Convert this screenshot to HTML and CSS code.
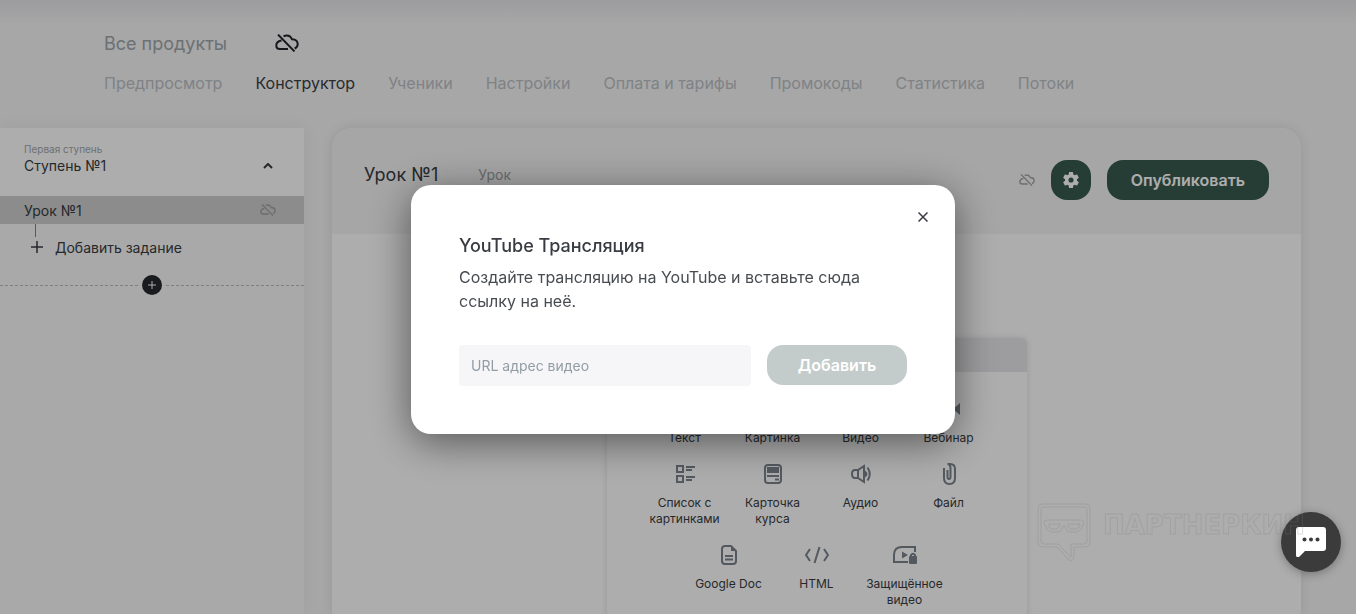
FILE: index.html
```html
<!DOCTYPE html>
<html lang="ru">
<head>
  <meta charset="UTF-8">
  <title>Конструктор</title>
  <meta name="viewport" content="width=device-width, initial-scale=1.0">
  <link rel="stylesheet" href="styles.css">
</head>
<body>

  <svg class="sprite" aria-hidden="true">
    <symbol id="cloud-off" viewBox="0 0 24 18">
      <path d="M6.500 6.500Q1.300 7.500 1.300 11.500 1.300 15 5 15h8M8.500 2.200Q14.500-.2 17 5.300q5.700.3 5.700 4.900 0 2.800-3 4.300M3 .6L19.500 17.400" fill="none" stroke="currentColor" stroke-width="2"/>
    </symbol>
  </svg>

  <header class="header">
    <div class="header-top">
      <a href="#" class="all-products">Все продукты</a>
      <svg class="cloud-big"><use href="#cloud-off"/></svg>
    </div>
    <nav class="tabs">
      <a href="#">Предпросмотр</a>
      <a href="#" class="active">Конструктор</a>
      <a href="#">Ученики</a>
      <a href="#">Настройки</a>
      <a href="#">Оплата и тарифы</a>
      <a href="#">Промокоды</a>
      <a href="#">Статистика</a>
      <a href="#">Потоки</a>
    </nav>
  </header>

  <main class="layout">
    <aside class="sidebar">
      <div class="step">
        <div>
          <div class="step-label">Первая ступень</div>
          <div class="step-name">Ступень №1</div>
        </div>
        <button class="icon-btn" aria-label="Свернуть">
          <svg width="10" height="6" viewBox="0 0 10 6"><path d="M1 5l4-4 4 4" fill="none" stroke="currentColor" stroke-width="2"/></svg>
        </button>
      </div>
      <a href="#" class="lesson">
        <span>Урок №1</span>
        <svg class="cloud-small"><use href="#cloud-off"/></svg>
      </a>
      <div class="tasks">
        <button class="add-task">
          <svg width="12" height="12" viewBox="0 0 12 12"><path d="M6 0v12M0 6h12" stroke="currentColor" stroke-width="1.500"/></svg>
          Добавить задание
        </button>
      </div>
      <div class="divider">
        <button class="add-step" aria-label="Добавить ступень">
          <svg width="8" height="8" viewBox="0 0 8 8"><path d="M4 0v8M0 4h8" stroke="currentColor"/></svg>
        </button>
      </div>
    </aside>

    <section class="panel">
      <div class="panel-header">
        <h1>Урок №1</h1>
        <span class="panel-type">Урок</span>
        <svg class="cloud-small"><use href="#cloud-off"/></svg>
        <button class="button settings" aria-label="Настройки">
          <svg width="16" height="16" viewBox="2 2 20 20"><path fill="currentColor" d="M19.430 12.980c.04-.32.07-.64.07-.98s-.03-.66-.07-.98l2.110-1.650c.19-.15.24-.42.12-.64l-2-3.460c-.12-.22-.39-.3-.61-.22l-2.490 1c-.52-.4-1.080-.73-1.690-.98l-.38-2.650A.49.49 0 0 0 14 2h-4c-.25 0-.46.18-.49.42l-.38 2.650c-.61.25-1.170.59-1.690.98l-2.490-1c-.23-.09-.49 0-.61.22l-2 3.460c-.13.22-.07.49.12.64l2.110 1.650c-.04.32-.07.65-.07.98s.03.66.07.98l-2.110 1.650c-.19.15-.24.42-.12.64l2 3.460c.12.22.39.3.61.22l2.490-1c.52.4 1.080.73 1.690.98l.38 2.650c.03.24.24.42.49.42h4c.25 0 .46-.18.49-.42l.38-2.650c.61-.25 1.170-.59 1.690-.98l2.490 1c.23.09.49 0 .61-.22l2-3.460c.12-.22.07-.49-.12-.64zM12 15.200a3.200 3.200 0 1 1 0-6.400 3.200 3.200 0 0 1 0 6.400z"/></svg>
        </button>
        <button class="button publish">Опубликовать</button>
      </div>

      <div class="blocks">
        <div class="blocks-bar"></div>
        <div class="blocks-list">
          <button class="block">
            <svg class="block-icon" viewBox="0 0 24 24"><path d="M4 6h16M4 12h16M4 18h10"/></svg>
            Текст
          </button>
          <button class="block">
            <svg class="block-icon" viewBox="0 0 24 24"><rect x="3" y="4" width="18" height="16" rx="2"/><path d="M4 17l5-5 4 4 3-3 4 4"/></svg>
            Картинка
          </button>
          <button class="block">
            <svg class="block-icon" viewBox="0 0 24 24"><rect x="3" y="4" width="18" height="16" rx="3"/><path class="solid" d="M10 8l6 4-6 4z"/></svg>
            Видео
          </button>
          <button class="block">
            <svg class="block-icon" viewBox="0 0 24 24"><rect x="2" y="6" width="13" height="12" rx="2"/><path class="solid" d="M23 6v12l-7-6z"/></svg>
            Вебинар
          </button>
          <button class="block">
            <svg class="block-icon" viewBox="0 0 24 24"><path d="M4 4h6v6H4zM4 14h6v6H4zM13 5h9M13 8h6M13 15h9M13 18h6"/></svg>
            Список с картинками
          </button>
          <button class="block">
            <svg class="block-icon" viewBox="0 0 24 24"><rect x="4" y="3" width="16" height="18" rx="3"/><path class="solid" d="M6 5h12v6H6z"/><path d="M6 14h12M14 17.500h4"/></svg>
            Карточка курса
          </button>
          <button class="block">
            <svg class="block-icon" viewBox="0 0 24 24"><path d="M15 4v16l-6-4H6q-3 0-3-4t3-4h3zM9 8v8M18.500 5.500q4.500 6.500 0 13"/><path class="solid" d="M16 8.500q5 3.500 0 7z"/></svg>
            Аудио
          </button>
          <button class="block">
            <svg class="block-icon" viewBox="0 0 24 24"><path d="M10.500 8v7q0 2 1.500 2t1.500-2V6.500q0-4.500-3-4.500M7 6v10q0 6 5.500 6t5.500-6V7q0-5-5-5h-2.500"/></svg>
            Файл
          </button>
          <button class="block">
            <svg class="block-icon" viewBox="0 0 24 24"><path d="M14 3H8a3 3 0 0 0-3 3v12a3 3 0 0 0 3 3h8a3 3 0 0 0 3-3V8zM8 13h8M8 16.500h8"/><path class="solid" d="M14 3v5h5z"/></svg>
            Google Doc
          </button>
          <button class="block">
            <svg class="block-icon" viewBox="0 0 24 24"><path d="M5 6l-4 6 4 6M19 6l4 6-4 6M14.500 4l-5 16"/></svg>
            HTML
          </button>
          <button class="block">
            <svg class="block-icon" viewBox="0 0 24 24"><path d="M15 19H1v-7Q1 4 9 4h13v5"/><path class="solid" d="M9 8.500l6 3.500-6 3.500z"/><rect class="solid" x="16" y="13" width="8" height="8" rx="1"/><path d="M18 14v-2q2-2.500 4 0v2"/></svg>
            Защищённое видео
          </button>
        </div>
      </div>
    </section>
  </main>

  <div class="overlay">
    <div class="modal" role="dialog" aria-labelledby="modal-title">
      <button class="icon-btn close" aria-label="Закрыть">
        <svg width="10" height="10" viewBox="0 0 10 10"><path d="M.5.5l9 9M9.500.5l-9 9" stroke="currentColor" stroke-width="1.500"/></svg>
      </button>
      <h2 id="modal-title">YouTube Трансляция</h2>
      <p>Создайте трансляцию на YouTube и вставьте сюда ссылку на неё.</p>
      <form class="modal-form">
        <input type="text" id="video-url" placeholder="URL адрес видео" aria-label="URL адрес видео">
        <button type="button" class="button submit">Добавить</button>
      </form>
    </div>
  </div>

  <button class="chat" aria-label="Чат">
    <svg width="30" height="30" viewBox="0 0 30 30"><path d="M3 0h24q3 0 3 3v18q0 3-3 3H9l-6 6q-3 1-3-2V3q0-3 3-3z" fill="#fff"/><g fill="#3b3b3b"><circle cx="8.500" cy="12.500" r="2"/><circle cx="15" cy="12.500" r="2"/><circle cx="21.500" cy="12.500" r="2"/></g></svg>
  </button>

  <div class="watermark">
    <svg width="54" height="60" viewBox="0 0 54 60" fill="none" stroke="currentColor">
      <path d="M5 1h44q4 0 4 4v34q0 5-5 5h-11v11q-2 5-6 1L20 44H6q-5 0-5-5V5q0-4 4-4z"/>
      <path d="M6 4h42q2 0 2 2v32q0 3-3 3H34v13L21 41H7q-3 0-3-3V6q0-2 2-2z"/>
      <path d="M10 17h34q3 0 3 3t-2 3q-1 6-7 6h-4q-5 0-6-6h-2q-1 6-6 6h-4q-6 0-7-6-2 0-2-3t3-3zM12 21h11q-1 5-4 5h-4q-3 0-3-5zM31 21h12q-1 5-4 5h-4q-4 0-4-5z"/>
    </svg>
    <span>ПАРТНЕРКИН</span>
  </div>

</body>
</html>
```
FILE: styles.css
```css
* {
  box-sizing: border-box;
}

body {
  margin: 0;
  height: 100vh;
  display: flex;
  flex-direction: column;
  overflow: hidden;
  background-color: #f6f6f6;
  color: #383c42;
  font-family: Inter, Roboto, sans-serif;
  font-size: 14px;
}

a {
  color: inherit;
  text-decoration: none;
}

button {
  padding: 0;
  border: none;
  background: none;
  color: inherit;
  font: inherit;
  cursor: pointer;
}

.sprite {
  display: none;
}

/* Header */
.header {
  padding: 31px 104px 33px;
  background: linear-gradient(#e6e6ea, #f6f6f6 24px);
}

.header-top {
  display: flex;
  align-items: center;
  gap: 48px;
  height: 24px;
}

.all-products {
  color: #a0a7ac;
  font-size: 18px;
}

.cloud-big {
  width: 24px;
  height: 18px;
  color: #202329;
}

.cloud-small {
  width: 16px;
  height: 12px;
  color: #a0a0a0;
}

.tabs {
  display: flex;
  gap: 33px;
  margin-top: 16px;
  color: #bbc1c6;
  font-size: 16px;
  line-height: 24px;
  white-space: nowrap;
}

.tabs .active {
  color: #3c4045;
}

/* Layout */
.layout {
  flex: 1;
  display: flex;
  gap: 28px;
  min-height: 0;
  padding-right: 55px;
}

.sidebar {
  width: 304px;
  flex-shrink: 0;
  background-color: #f9f9f9;
  box-shadow: 0 0 16px rgba(0, 0, 0, 0.05);
}

.step {
  display: flex;
  justify-content: space-between;
  align-items: flex-end;
  height: 68px;
  padding: 0 31px 20px 24px;
  background-color: #fff;
}

.step .icon-btn {
  padding-bottom: 7px;
}

.step-label {
  color: #a0a7ac;
  font-size: 10px;
  line-height: 14px;
}

.step-name {
  line-height: 20px;
}

.icon-btn {
  display: flex;
}

.lesson {
  display: flex;
  justify-content: space-between;
  align-items: center;
  height: 28px;
  padding: 0 28px 0 24px;
  background-color: #cecece;
}

.tasks {
  height: 51px;
  padding-left: 31px;
}

.tasks::before {
  content: "";
  display: block;
  height: 13px;
  margin-left: 4px;
  border-left: 1px solid #808388;
}

.add-task {
  display: flex;
  align-items: center;
  gap: 12px;
  height: 20px;
}

.divider {
  display: flex;
  align-items: center;
  gap: 4px;
  height: 20px;
}

.divider::before,
.divider::after {
  content: "";
  flex: 1;
  border-top: 1px dashed #bcbcbc;
}

.add-step {
  display: flex;
  align-items: center;
  justify-content: center;
  width: 20px;
  height: 20px;
  border-radius: 50%;
  background-color: #26292f;
  color: #fff;
}

/* Lesson panel */
.panel {
  flex: 1;
  border-radius: 20px 20px 0 0;
  background-color: #fff;
  box-shadow: 0 0 12px rgba(0, 0, 0, 0.1);
  overflow: hidden;
}

.panel-header {
  display: flex;
  align-items: center;
  gap: 16px;
  height: 106px;
  padding: 0 32px 2px;
  background-color: #f5f5f5;
}

.panel-header h1 {
  margin: 0 24px 12px 0;
  font-size: 18px;
  font-weight: normal;
}

.panel-type {
  margin: 0 auto 12px 0;
  color: #a0a0a0;
}

.button {
  height: 40px;
  border-radius: 16px;
  color: #fff;
  font-size: 16px;
  font-weight: 600;
}

.settings {
  display: flex;
  align-items: center;
  justify-content: center;
  width: 40px;
  background-color: #385b50;
}

.publish {
  padding: 0 24px;
  background-color: #385b50;
}

.blocks {
  width: 420px;
  height: 100%;
  margin: 104px auto 0;
  border-radius: 6px;
  box-shadow: 0 0 6px rgba(0, 0, 0, 0.12);
}

.blocks-bar {
  height: 34px;
  border-radius: 6px 6px 0 0;
  background-color: #e7e7ea;
}

.blocks-list {
  display: flex;
  flex-wrap: wrap;
  justify-content: center;
  row-gap: 16px;
  padding: 25px 34px;
}

.block {
  display: flex;
  flex-direction: column;
  align-items: center;
  gap: 9px;
  width: 88px;
  font-size: 12px;
  line-height: 16px;
}

.block-icon {
  width: 24px;
  height: 24px;
  fill: none;
  stroke: #7c848e;
  stroke-width: 2;
}

.block-icon .solid {
  fill: #7c848e;
  stroke: none;
}

/* Modal */
.overlay {
  position: fixed;
  inset: 0;
  display: flex;
  align-items: center;
  justify-content: center;
  padding: 5px 0 0 10px;
  background-color: rgba(0, 0, 0, 0.32);
}

.modal {
  position: relative;
  width: 544px;
  padding: 49px 48px 48px;
  border-radius: 20px;
  background-color: #fff;
  box-shadow: 0 8px 40px rgba(0, 0, 0, 0.5);
}

.close {
  position: absolute;
  top: 27px;
  right: 27px;
}

.modal h2 {
  margin: 0 0 7px;
  font-size: 18px;
  font-weight: 500;
  line-height: 24px;
}

.modal p {
  margin: 0 0 32px;
  color: #484c50;
  font-size: 16px;
  line-height: 24px;
}

.modal-form {
  display: flex;
  gap: 16px;
}

.modal-form input {
  flex: 1;
  min-width: 0;
  height: 41px;
  padding: 0 12px;
  border: none;
  border-radius: 4px;
  background-color: #f6f6f9;
  font: inherit;
}

.modal-form input::placeholder {
  color: #929da5;
}

.submit {
  width: 140px;
  background-color: #c4cccb;
}

/* Chat and watermark */
.chat {
  position: fixed;
  right: 15px;
  bottom: 42px;
  display: flex;
  align-items: center;
  justify-content: center;
  width: 60px;
  height: 60px;
  border-radius: 50%;
  background-color: #3b3b3b;
  box-shadow: 0 2px 10px rgba(0, 0, 0, 0.3);
}

.watermark {
  position: fixed;
  right: 51px;
  bottom: 51px;
  display: flex;
  gap: 12px;
  color: rgba(128, 128, 128, 0.3);
  pointer-events: none;
}

.watermark span {
  color: transparent;
  font-family: "DejaVu Sans", sans-serif;
  font-size: 26px;
  font-weight: bold;
  line-height: 44px;
  -webkit-text-stroke: 1px rgba(128, 128, 128, 0.25);
}
```
